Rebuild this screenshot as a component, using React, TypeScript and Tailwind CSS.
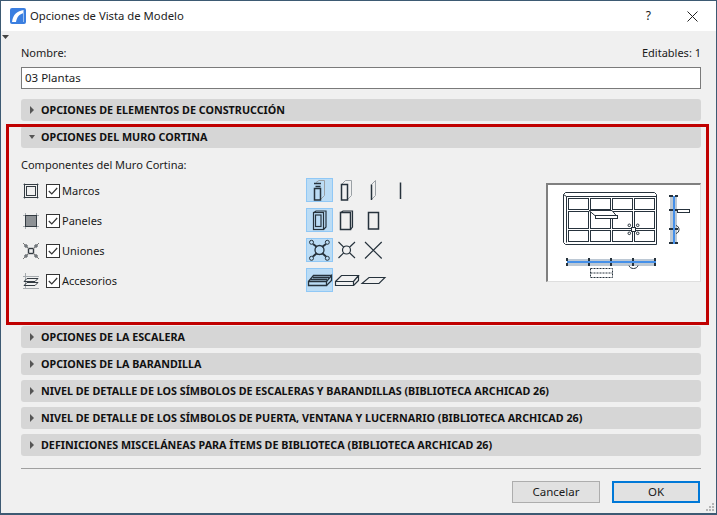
import type { ReactNode } from 'react';

const sections = [
  'OPCIONES DE LA ESCALERA',
  'OPCIONES DE LA BARANDILLA',
  'NIVEL DE DETALLE DE LOS SÍMBOLOS DE ESCALERAS Y BARANDILLAS (BIBLIOTECA ARCHICAD 26)',
  'NIVEL DE DETALLE DE LOS SÍMBOLOS DE PUERTA, VENTANA Y LUCERNARIO (BIBLIOTECA ARCHICAD 26)',
  'DEFINICIONES MISCELÁNEAS PARA ÍTEMS DE BIBLIOTECA (BIBLIOTECA ARCHICAD 26)',
];

function SectionHeader({ label, open = false }: { label: string; open?: boolean }) {
  return (
    <div className="flex h-[22px] items-center rounded-[3px] bg-[#d6d6d6] pl-[8px]">
      <svg width="6" height="8" viewBox="0 0 6 8" className="mr-[6px] shrink-0">
        {open ? <path d="M0 2h6L3 6z" fill="#555" /> : <path d="M1 0l4 4-4 4z" fill="#555" />}
      </svg>
      <span className="pt-[1px] text-[10.75px] font-bold text-[#111]">{label}</span>
    </div>
  );
}

function Check() {
  return (
    <span className="flex h-[14px] w-[14px] items-center justify-center border border-[#333] bg-white">
      <svg width="10" height="8" viewBox="0 0 10 8" fill="none" stroke="#333" strokeWidth="1.2">
        <path d="M.8 4l3 3L9.2 1" />
      </svg>
    </span>
  );
}

function Glyph({ children }: { children: ReactNode }) {
  return (
    <svg width="16" height="16" viewBox="0 0 16 16" fill="none" stroke="#333b42" strokeWidth="1">
      {children}
    </svg>
  );
}

function OptionCell({ active = false, children }: { active?: boolean; children: ReactNode }) {
  return (
    <div
      className={`flex h-[24px] w-[27px] items-center justify-center border ${
        active ? 'border-[#90c8f6] bg-[#bbdcf5]' : 'border-transparent'
      }`}
    >
      <svg width="25" height="22" viewBox="0 0 25 22" fill="none" stroke="#26323c" strokeWidth="1" className="overflow-visible">
        {children}
      </svg>
    </div>
  );
}

const rows: { label: string; glyph: ReactNode; cells: ReactNode[] }[] = [
  {
    label: 'Marcos',
    glyph: (
      <>
        <path d="M0 1.500h16M0 14.500h16M1.500 0v16M14.500 0v16" stroke="#a5aaae" />
        <rect x="1.500" y="1.500" width="13" height="13" strokeWidth="1" />
        <rect x="3.500" y="3.500" width="9" height="9" strokeWidth="1" />
      </>
    ),
    cells: [
      <>
        <path d="M9 3.500l3-2h5.500v15l-4 4" stroke="#9aa0a5" />
        <path d="M7 4.500h7M8.500 7.500h5" strokeWidth="1.500" />
        <rect x="7.500" y="9.500" width="6" height="11.500" strokeWidth="1.500" />
      </>,
      <>
        <path d="M7.500 5.500l4-4h6v15l-4 4" stroke="#9aa0a5" />
        <rect x="7.500" y="5.500" width="6" height="15.500" strokeWidth="1.500" />
      </>,
      <>
        <path d="M10.500 5.500l4-4v15l-4 4" stroke="#9aa0a5" />
        <path d="M10.500 5.500v15.500" strokeWidth="1.500" />
      </>,
      <path d="M12.500 3.500v16.500" strokeWidth="1.500" />,
    ],
  },
  {
    label: 'Paneles',
    glyph: (
      <>
        <path d="M0 2.500h16M0 13.500h16M2.500 0v16M13.500 0v16" stroke="#a5aaae" />
        <rect x="2.500" y="2.500" width="11" height="11" fill="#8d9195" />
      </>
    ),
    cells: [
      <>
        <path d="M7 3.500l2-1.500h10v16l-2.500 2.500" strokeWidth="1.200" />
        <rect x="6.500" y="3.500" width="10" height="17" strokeWidth="1.200" />
        <rect x="8.500" y="6" width="5.500" height="11.500" strokeWidth="1.200" />
      </>,
      <>
        <path d="M7 3.500l2-1.500h9.500v16l-2 2.500" strokeWidth="1.200" />
        <rect x="6.500" y="3.500" width="10" height="17" strokeWidth="1.500" />
      </>,
      <rect x="7.500" y="3.500" width="10" height="16.500" strokeWidth="1.500" />,
    ],
  },
  {
    label: 'Uniones',
    glyph: (
      <>
        <rect x="5.500" y="5.500" width="5" height="5" strokeWidth="1.400" />
        <path d="M4 4l2 2M12 4l-2 2M4 12l2-2M12 12l-2-2M0 0l2 2M16 0l-2 2M0 16l2-2M16 16l-2-2" stroke="#777" />
        <circle cx="3" cy="3" r="1.200" />
        <circle cx="13" cy="3" r="1.200" />
        <circle cx="3" cy="13" r="1.200" />
        <circle cx="13" cy="13" r="1.200" />
      </>
    ),
    cells: [
      <>
        <circle cx="12.500" cy="11" r="4.500" strokeWidth="1.300" />
        <path d="M6 5l4 3M19 5l-4 3M6 17.500l4-3.500M19 17.500l-4-3.500" strokeWidth="2" />
        <circle cx="4.500" cy="3.300" r="2" fill="#bbdcf5" />
        <circle cx="20.300" cy="3.300" r="2" fill="#bbdcf5" />
        <circle cx="4.500" cy="19.300" r="2" fill="#bbdcf5" />
        <circle cx="20.300" cy="19.300" r="2" fill="#bbdcf5" />
      </>,
      <>
        <circle cx="12.500" cy="11" r="4" strokeWidth="1.200" />
        <path d="M4.500 3l5.200 5.200M21 3l-5.500 5.200M4.500 19l5.200-5.200M21 19l-5.500-5.200" strokeWidth="1.200" />
      </>,
      <path d="M4 3l16.700 16.500M20.700 3L4 19.500" strokeWidth="1.200" />,
    ],
  },
  {
    label: 'Accesorios',
    glyph: (
      <>
        <path d="M0 3.500h16M0 15.500h16M2.500 0v16" stroke="#a5aaae" />
        <path d="M4 5.500h11l-3 3H1zM4 9.500h11l-3 3H1z" />
      </>
    ),
    cells: [
      <>
        <path d="M1.500 12.500h18v4h-18zM1.500 12.500l5-6h18" strokeWidth="1.300" />
        <path d="M4 10.500h16M6 8.500h16M19.500 16.500l5-5v-5l-5 6" strokeWidth="1.300" />
      </>,
      <path d="M1.500 12.500h18v4h-18zM1.500 12.500l6-6h17l-5 6M19.500 16.500l5-5v-5" strokeWidth="1.200" />,
      <path d="M1 14.500l7-6h16l-6 6z" strokeWidth="1.100" />,
    ],
  },
];

// Drawn in screen pixels from the preview's top left corner
function Preview() {
  const cols: [number, number][] = [
    [20.5, 40.5],
    [42.5, 62.5],
    [64.5, 84.5],
    [86.5, 106.5],
  ];
  const cellRows: [number, number][] = [
    [13.5, 24.5],
    [26.5, 43.5],
    [45.5, 56.5],
  ];
  const posts = [19, 41, 63, 85, 107];
  const stops = [11, 25, 44, 58];
  return (
    <div className="mt-[10px] h-[99px] w-[155px] border-t-2 border-r border-b border-l-2 border-t-[#808080] border-r-[#dedede] border-b-[#dedede] border-l-[#808080] bg-white">
      <svg width="152" height="96" viewBox="0 0 152 96" fill="none" stroke="#26323c" strokeWidth="1">
        <path d="M17.500 7.500h89l2 2v50h-91l-2-2v-48z" />
        <path d="M15.500 9.500l3 2h90M18.500 11.500v46" />
        {cols.map(([x1, x2]) =>
          cellRows.map(([y1, y2]) => (
            <rect key={`${x1}-${y1}`} x={x1} y={y1} width={x2 - x1} height={y2 - y1} />
          )),
        )}
        <path d="M41 25.500l7 6h21l-5-6z" fill="#fff" />
        <rect x="47.500" y="30.500" width="22" height="3" fill="#fff" />
        <rect x="83.500" y="42.500" width="4" height="4" fill="#fff" />
        <circle cx="81.300" cy="40.300" r="1.300" />
        <circle cx="89.700" cy="40.300" r="1.300" />
        <circle cx="81.300" cy="48.300" r="1.300" />
        <circle cx="89.700" cy="48.300" r="1.300" />

        {/* side section */}
        <rect x="122" y="11" width="7" height="48" fill="#bcc8d4" stroke="none" />
        <path d="M126 11v48" stroke="#1e7ef0" strokeWidth="1.500" />
        {stops.map((y) => (
          <g key={y} fill="#26323c" stroke="none">
            <rect x="121" y={y - 1} width="4" height="2" />
            <rect x="127" y={y - 1} width="3" height="2" />
          </g>
        ))}
        <rect x="129.500" y="24.500" width="12" height="3" fill="#fff" />
        <path d="M128 40.500c4 1 4 7 0 8" />

        {/* plan section */}
        <rect x="19" y="74" width="89" height="7" fill="#bcc8d4" stroke="none" />
        <path d="M19 77h89" stroke="#1e7ef0" strokeWidth="1.500" />
        {posts.map((x) => (
          <g key={x} fill="#26323c" stroke="none">
            <rect x={x - 1} y="73" width="2" height="3" />
            <rect x={x - 1} y="78" width="2" height="3" />
          </g>
        ))}
        <path d="M81 80.500c1 4 8 4 9 0" />
        <rect x="42.500" y="83.500" width="22" height="9" strokeDasharray="2 1" />
        <path d="M42.500 88h22" strokeDasharray="2 1" />
      </svg>
    </div>
  );
}

export default function App() {
  return (
    <div className="relative flex h-[515px] w-[717px] flex-col overflow-hidden border border-b-2 border-[#3d5a73] bg-[#f0f0f0] font-['Noto_Sans',sans-serif] text-[11px] text-[#1a1a1a]">
      {/* Title bar */}
      <div className="flex h-[30px] shrink-0 items-center bg-white pl-[9px]">
        <svg width="16" height="16" viewBox="0 0 16 16" className="mr-[4px]">
          <rect width="16" height="16" rx="2" fill="#3b7fe0" />
          <path d="M2 14C3 6 7 3 14 2v3C9 6 7 9 6 14z" fill="#fff" />
          <path d="M14 2h-1v12h1z" fill="#9cc0f0" />
        </svg>
        <span className="text-[11.3px] text-[#222]">Opciones de Vista de Modelo</span>
        <span className="ml-auto mr-[36px] text-[12px]">?</span>
        <svg width="11" height="11" viewBox="0 0 11 11" stroke="#222" className="mr-[18px]">
          <path d="M.5.500l10 10M10.500.500l-10 10" />
        </svg>
      </div>

      <div className="relative flex min-h-0 flex-1 flex-col pl-[20px] pr-[15px] pt-[14px]">
        <svg width="7" height="4" viewBox="0 0 7 4" className="absolute left-[1px] top-[4px]">
          <path d="M0 0h7L3.500 4z" fill="#444" />
        </svg>

        <div className="flex h-[16px] items-center justify-between">
          <span>Nombre:</span>
          <span>Editables: 1</span>
        </div>
        <div className="mt-[6px] flex h-[22px] items-center border border-[#7a7a7a] bg-white px-[3px] text-[11.5px]">
          03 Plantas
        </div>

        <div className="mt-[10px]">
          <SectionHeader label="OPCIONES DE ELEMENTOS DE CONSTRUCCIÓN" />
        </div>

        <div className="mt-[5px]">
          <SectionHeader label="OPCIONES DEL MURO CORTINA" open />
        </div>
        <div className="mt-[9px] h-[16px] leading-[16px]">Componentes del Muro Cortina:</div>

        <div className="flex h-[153px]">
          <div className="flex flex-col gap-[6px] pt-[5px]">
            {rows.map((row) => (
              <div key={row.label} className="flex h-[24px] w-[285px] items-center pt-[2px]">
                <span className="ml-[2px] flex w-[23px]">
                  <Glyph>{row.glyph}</Glyph>
                </span>
                <Check />
                <span className="ml-[2px]">{row.label}</span>
              </div>
            ))}
          </div>
          <div className="flex w-[240px] flex-col gap-[6px] pt-[5px]">
            {rows.map((row) => (
              <div key={row.label} className="flex">
                {row.cells.map((cell, i) => (
                  <OptionCell key={i} active={i === 0}>
                    {cell}
                  </OptionCell>
                ))}
              </div>
            ))}
          </div>
          <Preview />
        </div>

        <div className="flex flex-col gap-[5px]">
          {sections.map((s) => (
            <SectionHeader key={s} label={s} />
          ))}
        </div>

        <div className="mt-[12px] border-t border-[#a0a0a0]" />
        <div className="mt-[12px] flex justify-end gap-[12px] pr-[1px]">
          <button type="button" className="h-[22px] w-[88px] border border-[#adadad] bg-[#e1e1e1] text-[11.5px]">
            Cancelar
          </button>
          <button type="button" className="h-[22px] w-[88px] border-2 border-[#0078d7] bg-[#e1e1e1] text-[11.5px]">
            OK
          </button>
        </div>
      </div>

      {/* Annotation frame */}
      <div className="pointer-events-none absolute left-[5px] top-[123px] h-[201px] w-[703px] border-[3px] border-[#c00000]" />

      {/* Resize grip */}
      <svg width="10" height="10" viewBox="0 0 10 10" className="absolute bottom-[1px] right-[1px]" fill="#b5b5b5">
        <rect x="7" y="1" width="2" height="2" />
        <rect x="4" y="4" width="2" height="2" />
        <rect x="7" y="4" width="2" height="2" />
        <rect x="1" y="7" width="2" height="2" />
        <rect x="4" y="7" width="2" height="2" />
        <rect x="7" y="7" width="2" height="2" />
      </svg>
    </div>
  );
}
